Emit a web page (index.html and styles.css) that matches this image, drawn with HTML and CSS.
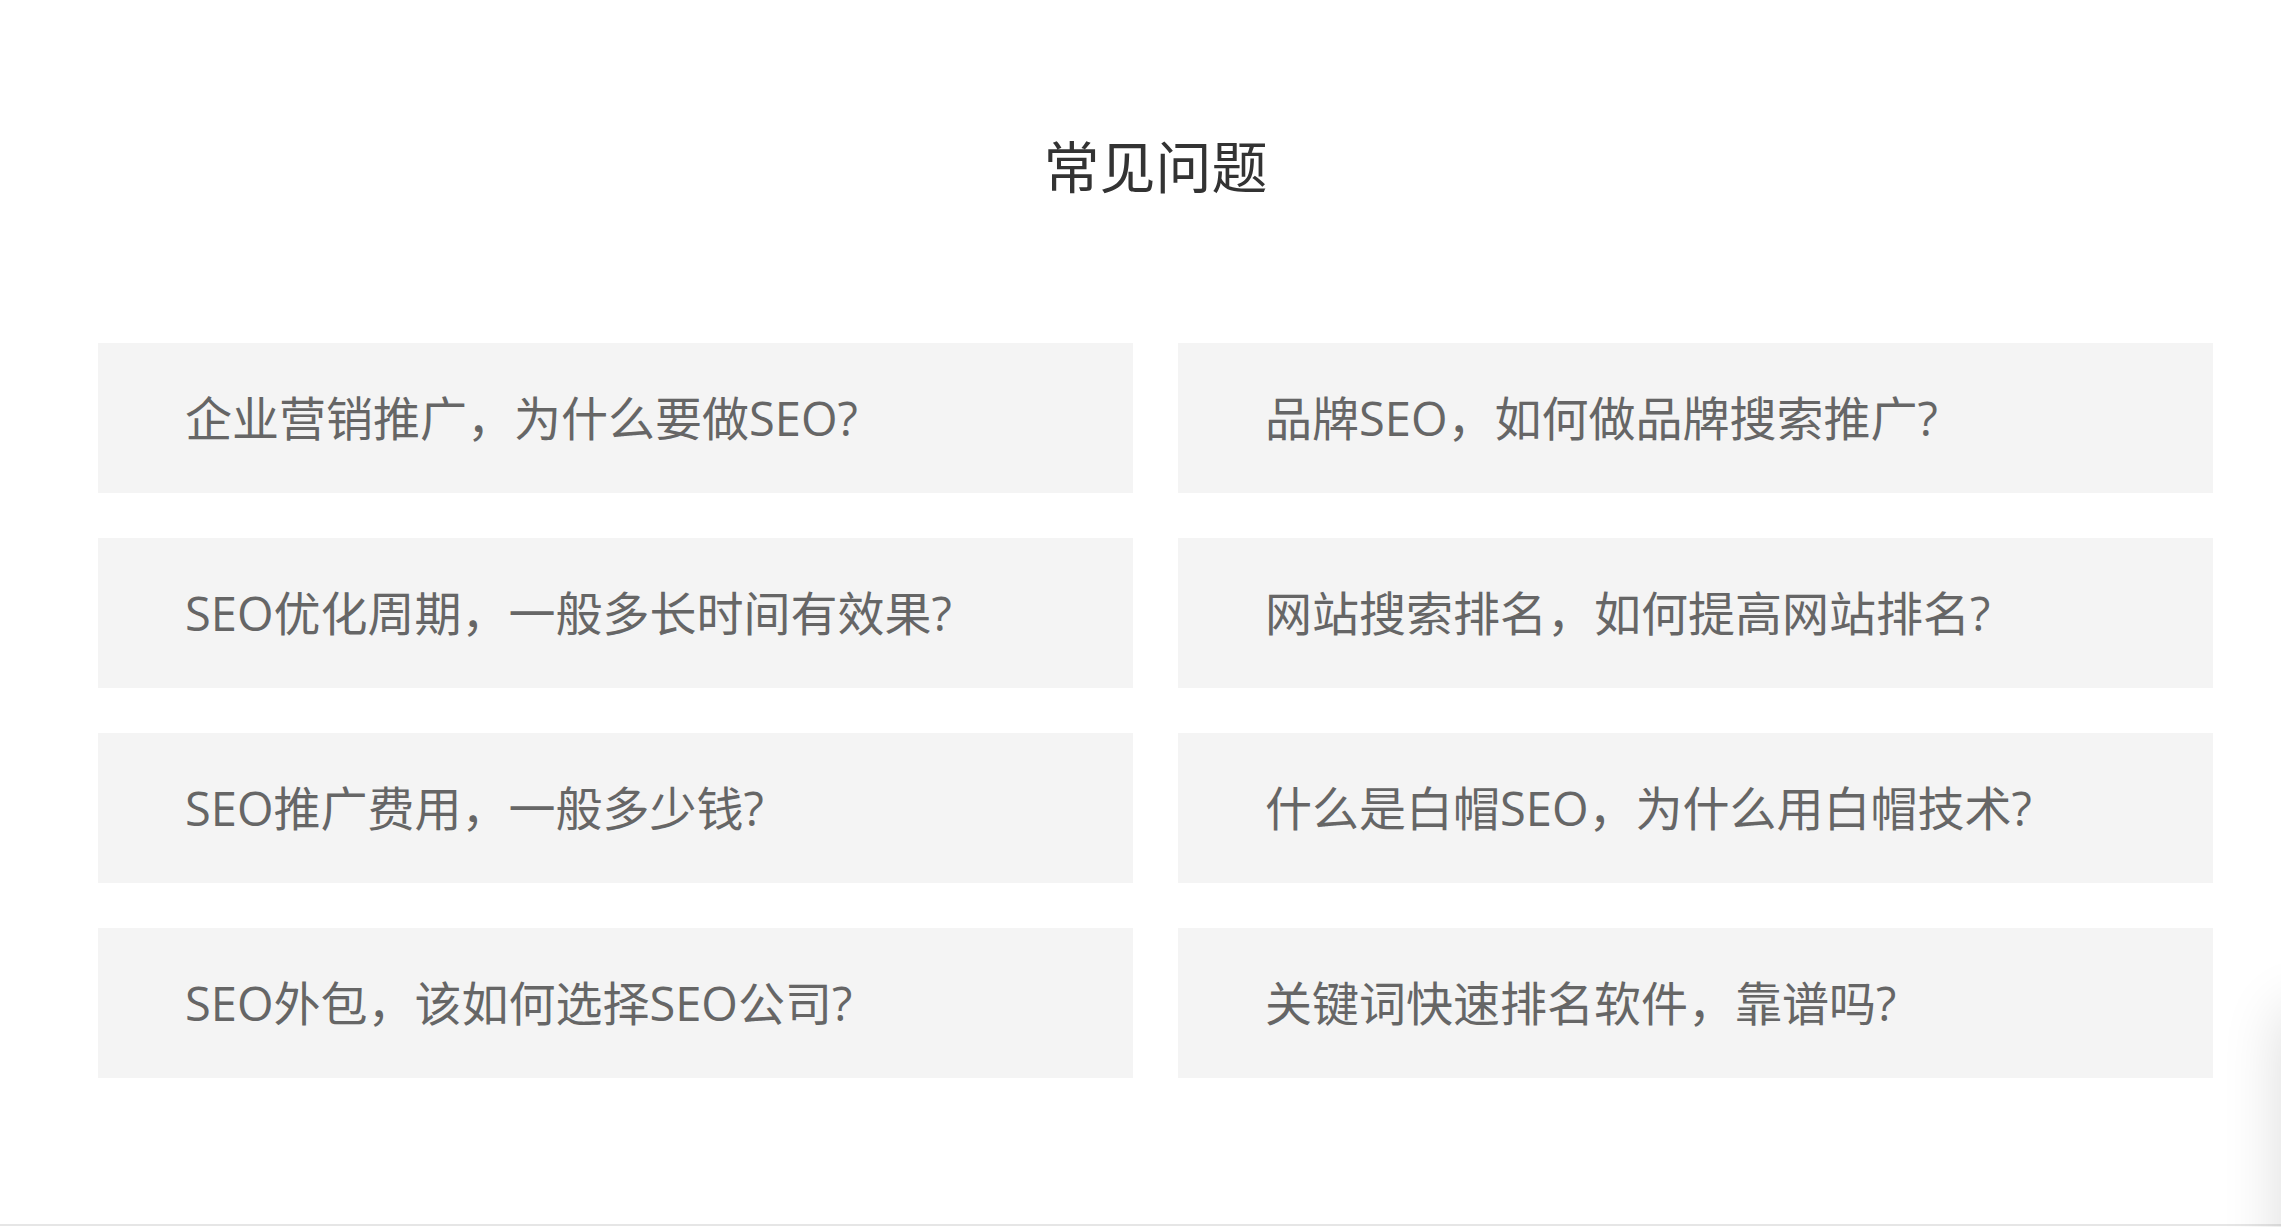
FILE: index.html
```html
<!DOCTYPE html>
<html lang="zh-CN">
<head>
<meta charset="utf-8">
<title>常见问题</title>
<link rel="stylesheet" href="styles.css">
</head>
<body>
<section class="faq">
  <h2 class="faq-title">常见问题</h2>
  <div class="faq-grid">
    <a class="faq-item" href="#">企业营销推广，为什么要做SEO?</a>
    <a class="faq-item" href="#">品牌SEO，如何做品牌搜索推广?</a>
    <a class="faq-item" href="#">SEO优化周期，一般多长时间有效果?</a>
    <a class="faq-item" href="#">网站搜索排名，如何提高网站排名?</a>
    <a class="faq-item" href="#">SEO推广费用，一般多少钱?</a>
    <a class="faq-item" href="#">什么是白帽SEO，为什么用白帽技术?</a>
    <a class="faq-item" href="#">SEO外包，该如何选择SEO公司?</a>
    <a class="faq-item" href="#">关键词快速排名软件，靠谱吗?</a>
  </div>
</section>
<div class="side-float"></div>
</body>
</html>
```

FILE: styles.css
```css
html, body {
  margin: 0;
  padding: 0;
  background: #ffffff;
}

body {
  font-family: "Open Sans", "Noto Sans CJK SC", sans-serif;
  overflow: hidden;
}

.faq {
  padding: 136px 0 146px;
  border-bottom: 2px solid #e6e6e6;
}

.faq-title {
  margin: 0 0 151px 98px;
  width: 2115px;
  text-align: center;
  font-family: "Noto Sans CJK SC", sans-serif;
  font-weight: 400;
  font-size: 56px;
  line-height: 56px;
  color: #333333;
}

.faq-grid {
  margin-left: 98px;
  width: 2115px;
  display: grid;
  grid-template-columns: 1035px 1035px;
  column-gap: 45px;
  row-gap: 45px;
}

.faq-item {
  height: 150px;
  box-sizing: border-box;
  padding: 0 0 5px 87px;
  display: flex;
  align-items: center;
  background: #f4f4f4;
  color: #666666;
  font-size: 47px;
  text-decoration: none;
  white-space: nowrap;
}

.side-float {
  position: fixed;
  left: 100%;
  top: 1010px;
  width: 120px;
  height: 400px;
  box-shadow: 0 0 60px rgba(0, 0, 0, 0.14);
  background: #fff;
}
```
